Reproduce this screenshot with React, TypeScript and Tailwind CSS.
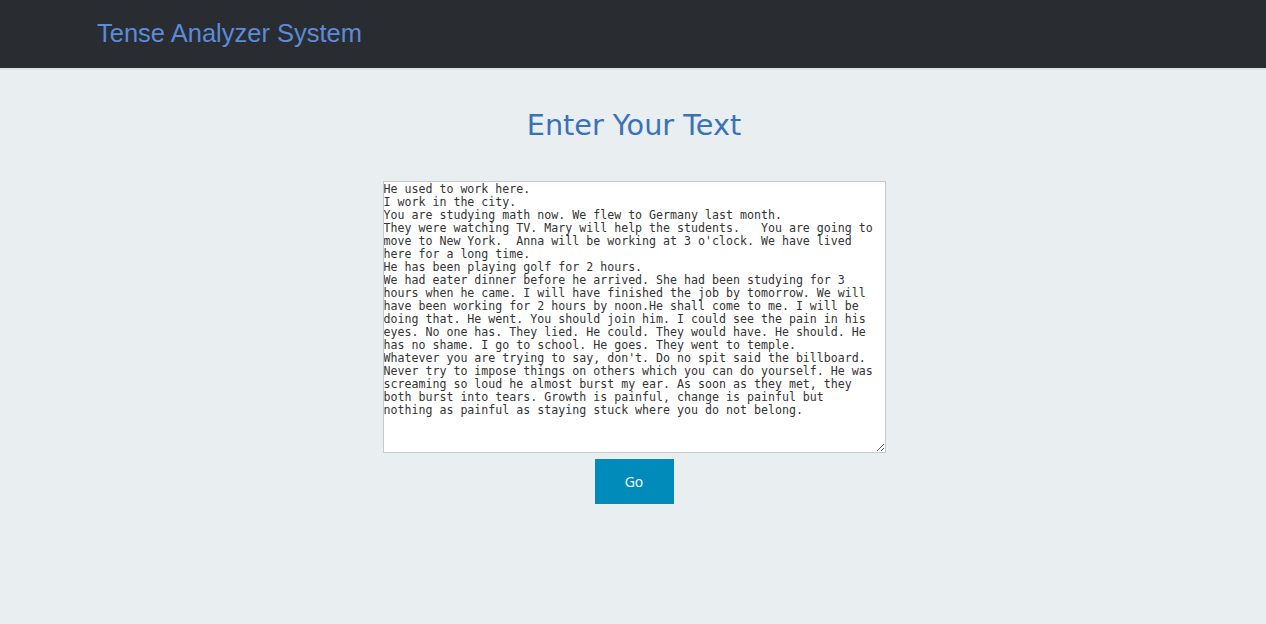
import { useEffect, useRef, useState } from 'react';

const SAMPLE = `He used to work here.
I work in the city.
You are studying math now. We flew to Germany last month.
They were watching TV. Mary will help the students.   You are going to move to New York.  Anna will be working at 3 o'clock. We have lived here for a long time.
He has been playing golf for 2 hours.
We had eater dinner before he arrived. She had been studying for 3 hours when he came. I will have finished the job by tomorrow. We will have been working for 2 hours by noon.He shall come to me. I will be doing that. He went. You should join him. I could see the pain in his eyes. No one has. They lied. He could. They would have. He should. He has no shame. I go to school. He goes. They went to temple.
Whatever you are trying to say, don't. Do no spit said the billboard. Never try to impose things on others which you can do yourself. He was screaming so loud he almost burst my ear. As soon as they met, they both burst into tears. Growth is painful, change is painful but nothing as painful as staying stuck where you do not belong.`;

export default function App() {
  const [text, setText] = useState(SAMPLE);
  const areaRef = useRef<HTMLTextAreaElement>(null);

  // put the caret at the end like the page after typing
  useEffect(() => {
    const el = areaRef.current;
    if (!el) return;
    el.focus();
    el.setSelectionRange(el.value.length, el.value.length);
  }, []);

  return (
    <div className="min-h-screen bg-[#e9eef1]">
      {/* Top bar */}
      <header className="h-[70px] bg-[#292d31] border-b-2 border-[#dde3e7] flex items-center">
        <h1 className="ml-[97px] text-[25.5px] text-[#5b8bd9] font-['Liberation_Sans',Arial,sans-serif] leading-none">
          Tense Analyzer System
        </h1>
      </header>

      <main className="flex flex-col items-center pl-[2px]">
        <h2 className="mt-[37px] text-[28.7px] leading-[36px] text-[#3a72b8] font-['DejaVu_Sans',sans-serif]">
          Enter Your Text
        </h2>

        <textarea
          ref={areaRef}
          value={text}
          onChange={(e) => setText(e.target.value)}
          spellCheck={false}
          className="mt-[38px] w-[503px] h-[272px] bg-white border border-[#c9c9c9] pl-0 pr-[6px] py-px text-[11.62px] leading-[13px] text-[#333] caret-black font-['DejaVu_Sans_Mono',monospace] outline-none resize"
        />

        <button
          type="button"
          className="mt-[6px] w-[79px] h-[45px] bg-[#008bbb] text-white text-[14px] font-['Open_Sans',sans-serif]"
        >
          Go
        </button>
      </main>
    </div>
  );
}
